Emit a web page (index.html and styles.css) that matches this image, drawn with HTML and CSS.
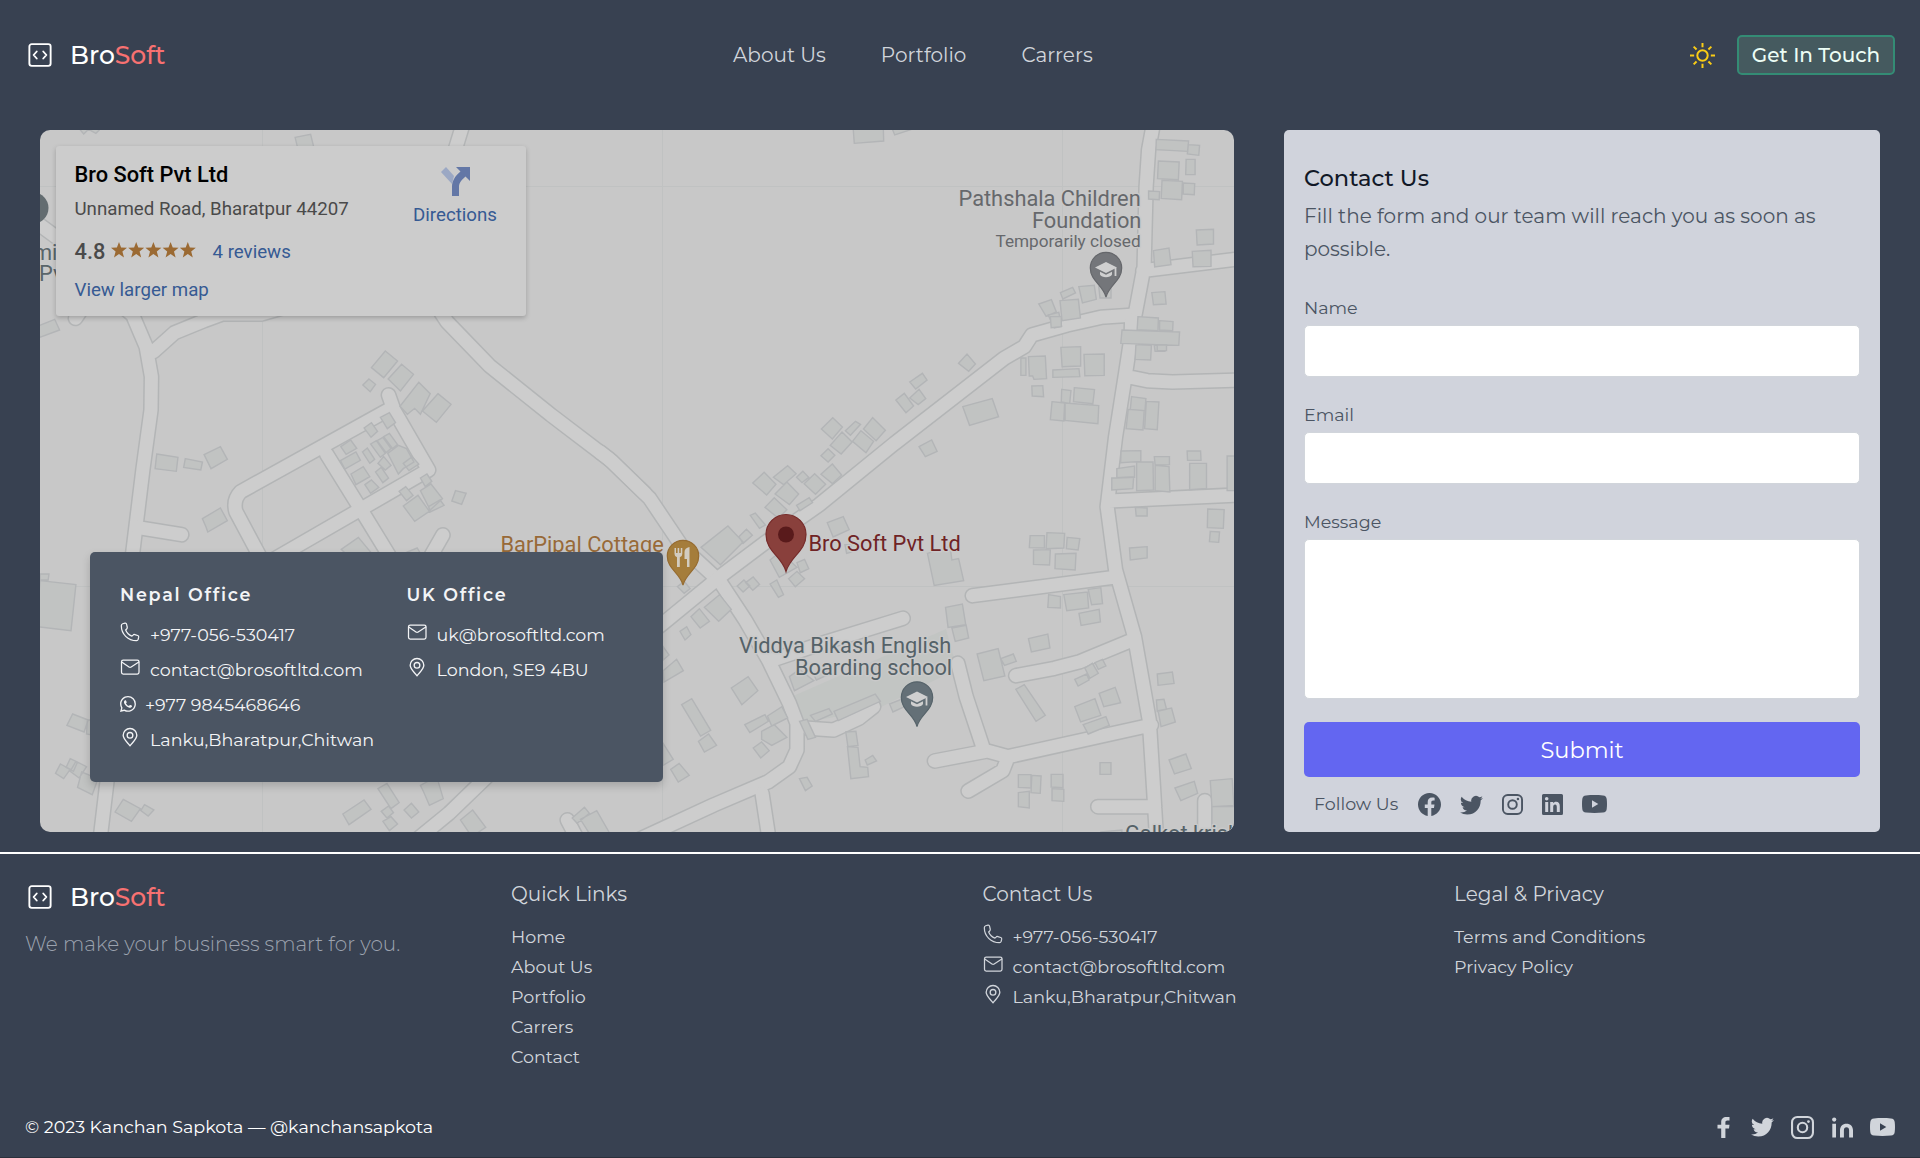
FILE: index.html
```html
<!DOCTYPE html>
<html lang="en">
<head>
<meta charset="utf-8">
<title>BroSoft</title>
<link rel="stylesheet" href="styles.css">
</head>
<body>
<svg class="sprite" aria-hidden="true">
  <symbol id="i-logo" viewBox="0 0 24 24"><g fill="none" stroke="currentColor" stroke-width="1.5" stroke-linecap="round" stroke-linejoin="round"><rect x="3.5" y="3.3" width="17" height="17.4" rx="1.9"/><path d="M9.4 9.2L6.9 12l2.5 2.8M14.6 9.2l2.5 2.8-2.5 2.8"/></g></symbol>
  <symbol id="i-phone" viewBox="0 0 24 24"><path fill="none" stroke="currentColor" stroke-width="1.5" stroke-linejoin="round" d="M3.2 2.1L6 1.4c1-.2 1.700.3 1.900 1.300L8.700 6.300c.2.9-.1 1.500-.7 2.100L6.800 9.600c1.300 3.200 4.300 6.100 7.500 7.400l1.300-1.300c.6-.7 1.300-.9 2.200-.6l3.400 1.100c1 .3 1.400 1 1.200 2l-.6 2.600c-.3 1.100-.9 1.600-2 1.600C9.500 22.400 1.600 14.500 1.600 4.500c0-1.300.5-2.100 1.600-2.400z"/></symbol>
  <symbol id="i-mail" viewBox="0 0 24 24"><g fill="none" stroke="currentColor" stroke-width="1.500" stroke-linejoin="round" stroke-linecap="round"><rect x="1.800" y="3.800" width="21" height="16.600" rx="2"/><path d="M2 6l8.800 6c.9.6 1.700.6 2.600 0L22.600 6"/></g></symbol>
  <symbol id="i-pin" viewBox="0 0 24 24"><g fill="none" stroke="currentColor" stroke-width="1.600"><path stroke-linejoin="round" d="M12 22.500c-3-4-8.200-8-8.200-12.500a8.200 8.200 0 0 1 16.400 0c0 4.500-5.200 8.500-8.200 12.500z"/><circle cx="12" cy="10" r="3.400"/></g></symbol>
  <symbol id="i-whatsapp" viewBox="0 0 16 16"><path fill="currentColor" d="M13.601 2.326A7.854 7.854 0 0 0 7.994 0C3.627 0 .068 3.558.064 7.926c0 1.399.366 2.760 1.057 3.965L0 16l4.204-1.102a7.933 7.933 0 0 0 3.790.965h.004c4.368 0 7.926-3.558 7.930-7.930A7.898 7.898 0 0 0 13.600 2.326zM7.994 14.521a6.573 6.573 0 0 1-3.356-.920l-.240-.144-2.494.654.666-2.433-.156-.251a6.560 6.560 0 0 1-1.007-3.505c0-3.626 2.957-6.584 6.591-6.584a6.560 6.560 0 0 1 4.660 1.931 6.557 6.557 0 0 1 1.928 4.660c-.004 3.639-2.961 6.592-6.592 6.592zm3.615-4.934c-.197-.099-1.170-.578-1.353-.646-.182-.065-.315-.099-.445.099-.133.197-.513.646-.627.775-.114.133-.232.148-.430.050-.197-.100-.836-.308-1.592-.985-.590-.525-.985-1.175-1.103-1.372-.114-.198-.011-.304.088-.403.087-.088.197-.232.296-.346.100-.114.133-.198.198-.330.065-.134.034-.248-.015-.347-.050-.099-.445-1.076-.612-1.470-.160-.389-.323-.335-.445-.340-.114-.007-.247-.007-.380-.007a.729.729 0 0 0-.529.247c-.182.198-.691.677-.691 1.654 0 .977.710 1.916.810 2.049.098.133 1.394 2.132 3.383 2.992.470.205.840.326 1.129.418.475.152.904.129 1.246.080.380-.058 1.171-.480 1.338-.943.164-.464.164-.860.114-.943-.049-.084-.182-.133-.380-.232z"/></symbol>
  <symbol id="i-fb-round" viewBox="0 0 16 16"><path fill="currentColor" d="M16 8.049c0-4.446-3.582-8.050-8-8.050C3.580 0-.002 3.603-.002 8.050c0 4.017 2.926 7.347 6.750 7.951v-5.625h-2.030V8.050H6.750V6.275c0-2.017 1.195-3.131 3.022-3.131.876 0 1.791.157 1.791.157v1.980h-1.009c-.993 0-1.303.621-1.303 1.258v1.510h2.218l-.354 2.326H9.250V16c3.824-.604 6.750-3.934 6.750-7.951z"/></symbol>
  <symbol id="i-fb" viewBox="0 0 12 21"><path fill="currentColor" d="M12 3.400V0H9C5.600 0 3.700 2 3.700 5v2.800H0v3.800h3.700V21h4.200v-9.400h3.600l.5-3.800H7.900V5.300c0-1.200.6-1.900 1.900-1.900z"/></symbol>
  <symbol id="i-twitter" viewBox="0 0 16 16"><path fill="currentColor" d="M5.026 15c6.038 0 9.341-5.003 9.341-9.334 0-.140 0-.282-.006-.422A6.685 6.685 0 0 0 16 3.542a6.658 6.658 0 0 1-1.889.518 3.301 3.301 0 0 0 1.447-1.817 6.533 6.533 0 0 1-2.087.793A3.286 3.286 0 0 0 7.875 6.030a9.325 9.325 0 0 1-6.767-3.429 3.289 3.289 0 0 0 1.018 4.382A3.323 3.323 0 0 1 .640 6.575v.045a3.288 3.288 0 0 0 2.632 3.218 3.203 3.203 0 0 1-.865.115 3.230 3.230 0 0 1-.614-.057 3.283 3.283 0 0 0 3.067 2.277A6.588 6.588 0 0 1 .780 13.580a6.320 6.320 0 0 1-.780-.045A9.344 9.344 0 0 0 5.026 15z"/></symbol>
  <symbol id="i-insta" viewBox="0 0 22 22"><g fill="none" stroke="currentColor" stroke-width="2"><rect x="1" y="1" width="20" height="20" rx="5"/><circle cx="11" cy="11" r="4.500"/></g><circle cx="16.700" cy="5.300" r="1.300" fill="currentColor"/></symbol>
  <symbol id="i-linkedin-box" viewBox="0 0 21 21"><path fill="currentColor" fill-rule="evenodd" d="M1.500 0h18A1.500 1.500 0 0 1 21 1.500v18a1.500 1.500 0 0 1-1.500 1.500h-18A1.500 1.500 0 0 1 0 19.500v-18A1.500 1.500 0 0 1 1.500 0zM3.200 8v9.900h3V8zM4.700 3a1.800 1.800 0 1 0 0 3.600 1.800 1.800 0 0 0 0-3.600zM8.200 8v9.900h3v-5c0-1.500.6-2.500 1.900-2.500s1.700 1 1.700 2.500v5h3v-5.600c0-3-1.200-4.600-3.600-4.600-1.500 0-2.400.7-3 1.600V8z"/></symbol>
  <symbol id="i-linkedin" viewBox="0 0 21 20"><g fill="currentColor"><circle cx="2.200" cy="2.100" r="2.100"/><path d="M.3 6.200H4V20H.3zM8 20v-7.200c0-4 2.600-6.600 6.500-6.600S21 8.800 21 12.800V20h-3.900v-7c0-2-.9-3.200-2.600-3.200S11.900 11 11.900 13v7z"/></g></symbol>
  <symbol id="i-youtube" viewBox="0 0 25 18"><path fill="currentColor" fill-rule="evenodd" d="M4 .4C9.500-.1 15.500-.1 21 .4c2.300.2 3.500 1.400 3.700 3.600.4 3.400.4 6.600 0 10-.2 2.200-1.400 3.400-3.700 3.600-5.500.5-11.500.5-17 0C1.700 17.400.5 16.200.3 14c-.4-3.400-.4-6.600 0-10C.5 1.800 1.700.6 4 .4zM10 5.200v7.600L16.300 9z"/></symbol>
  <symbol id="i-cap" viewBox="-12 -12 24 24"><g fill="#d0d0d0"><path d="M0-7L11-1.500 0 4-11-1.500z"/><path d="M-6 2.800L0 5.800l6-3V5.500C4.500 9-4.500 9-6 5.500zM8.600-1h1.800v8H8.600z"/></g></symbol>
</svg>

<header class="header">
  <a class="logo"><svg class="logo-icon"><use href="#i-logo"/></svg><span>Bro<span class="accent">Soft</span></span></a>
  <nav class="nav"><a>About Us</a><a>Portfolio</a><a>Carrers</a></nav>
  <div class="actions">
    <svg class="sun" viewBox="0 0 24 24"><g fill="none" stroke="#facc15" stroke-width="1.900"><circle cx="12" cy="12" r="5"/><path d="M12 0v4M12 20v4M0 12h4M20 12h4M3.500 3.500l2.800 2.800M17.700 17.700l2.800 2.800M3.500 20.500l2.800-2.800M17.700 6.300l2.800-2.800"/></g></svg>
    <a class="touch">Get In Touch</a>
  </div>
</header>

<main class="main">
  <section class="map">
    <svg class="map-art" viewBox="40 130 1194 702">
      <defs>
        <g id="roads" fill="none" stroke-linecap="round" stroke-linejoin="round">
          <g transform="scale(.40816 .33333)">
            <path d="M1135 370L1115 450 1060 900 1095 965 1200 1098 1350 1245 1500 1385 1580 1480"/>
            <path d="M70 650L150 722 240 860 325 945 358 1040 371 1130 370 1230 350 1410 325 1660 262 2346 245 2520M376 1055L428 998 500 962 545 942 640 942 760 900"/>
            <path d="M335 1582L445 1604M952 1185L965 1230 1050 1410 640 1700M958 1225L590 1475Q570 1500 578 1535L650 1700M800 1362L880 1520 970 1700M1085 1605L1050 1680M1210 2310L1100 2440 1010 2530M1390 2460L1420 2530M185 955L215 900"/>
          </g>
          <g transform="translate(640) scale(.40816 .33333)"><path d="M1258 370L1246 450 1240 560 1235 800 1212 950 1205 1030M1232 812L1480 775"/></g>
          <g transform="translate(600 320) scale(.42088 .33333)">
            <path d="M0 396L20 415 118 535 195 680 285 785 345 900 400 1020 450 1150 468 1210 468 1290 450 1340 400 1385 270 1455 150 1525 90 1560"/>
            <path d="M1262 -14L1190 -8 1110 15 1026 45 1008 80 960 115 700 370 520 555 390 670 285 770 150 910 60 1000"/>
            <path d="M1263 0L1262 50 1250 150 1225 350 1205 560 1225 750 1270 950 1305 1200 1315 1400 1322 1550M1262 172L1300 182 1360 186 1530 180M1210 543L1530 524M885 827L1215 773M1265 960L1140 1025 1080 1045 988 1067M1310 1215L970 1310 920 1293 795 1323M970 1310L957 1352 875 1413M912 1290L870 1130 850 1030M1318 1460L1183 1460M1437 1442L1437 1570M720 895L540 965 410 1020M385 1420L402 1560M495 1225L555 1230 615 1195 650 1160"/>
          </g>
        </g>
      </defs>
      <rect x="40" y="130" width="1194" height="702" fill="#c8c8c8"/>
      <path class="grid-line" d="M262.500 130v702M662.500 130v702M1062.500 130v702M40 186.500h1194M40 586.500h1194"/>
      <g class="school-area"><path d="M789 714L791 697 946 629 957 669 875 710 806 722z"/></g>
      <use href="#roads" class="road-edge"/>
      <use href="#roads" class="road-fill"/>
      <g class="buildings">
        <path transform="scale(.40816 .33333)" d="M190 380l15 22 12-14 18 12 18-22zM723 412l38-9 12 60h-40zM90 980l44-22 12 32-48 22z"/>
        <path transform="translate(0 320) scale(.40816 .33333)" d="M944 93l30 30-34 50-30-30zM984 133l29 30-32 50-30-36zM1026 187l28 34-24 62-14-18-18 18-18-24zM1073 221l32 32-36 54-34-34zM904 177l16 16-13 22-18-20zM384 402l52 10-4 42-52-8zM454 416l42 10-4 24-42-8zM500 404l40-24 17 38-40 28zM496 596l44-32 17 38-48 34-4-14zM1116 512l26 8-11 33-24-10zM932 292l22-14 15 30-20 18zM892 324l18-16 15 26-16 18zM835 380l24-20 15 25-26 18zM834 422l38-26 11 25-38 26zM860 462l30-22 16 30-34 24zM894 494l16-14 18 22-20 18zM888 396l12-12 18 34-12 12zM908 372l14-10 22 38-12 12zM924 362l14-10 20 34-12 12zM940 350l14-10 20 34-12 12zM926 430l14-20 18 26-14 14zM920 456l14-14 18 32-14 14zM950 400l26-24 20 10 18 40-26 20-12 16zM988 430l22-20 16 22-24 20zM978 514l16-14 18 26-16 16zM1030 474l16-12 12 22-16 16zM1030 512l26-20 28 44-30 34zM988 558l36-32 28 48-36 30zM1050 560l28-20 10 16-34 20zM836 688l42-36 30 44-40 30zM990 700l32-16 10 20zM98 782l88 12-12 138-84-12zM98 762h22l-2 18H98zM178 1182l38 18-10 36-42-20zM214 1200h16v46l-18-4zM172 1316l18 10-10 28-18-12zM148 1332l24 16-16 28-20-16zM186 1324l26 16-18 34-22-20zM200 1356l40 20-14 48-36-22zM302 1438l42 28-22 38-40-28zM354 1454l23 16-14 18-18-16zM840 1482l52-42 17 28-54 46zM926 1406l22-16 30 58-20 18zM934 1474l18-16 12 20-16 16zM938 1504l20-14 16 22-20 20zM990 1470l18-20 18 26-18 18zM1030 1396l40-26 16 66-34 20-14-40zM1128 1500l30-30 32 52-34 28zM1402 1494l30-32 12 18-30 30zM1422 1498l40-26 30 64-40 20z"/>
        <path transform="translate(640) scale(.40816 .33333)" d="M522 380h74l1 43-72 7zM616 380l8 25 44-18zM1265 418l79 5-2 31-78-5zM1343 434l28 2-2 30-28-4zM1270 483l51 3-2 53-51-3zM1338 478h22v46h-23zM1279 541l50 3-2 55-50-4zM1331 549l28 2-1 33-27-2zM1246 573l27 2-1 24-26-2zM1363 690l42-2v44l-40 3zM1258 752l38-8 5 50-40 7zM1353 754l46-3v48l-44 1zM1254 878l32-3 3 37-31 2zM1030 878l30-16 7 17-31 18zM977 912l31-13 12 37-25 13zM1029 902l45-4 5 56-45 8zM1075 860l38-4 5 42-34 11zM1000 945l26-8 7 42-18 5zM1124 860h30v34h-27zM1220 950l50 4-1 38-51-3zM1273 962l33 3-1 27-32-2zM1181 990l141 6-2 40-142-6zM1215 1034l38 2-2 44-38-2zM1260 1036h26v18h-24z"/>
        <path transform="translate(600 320) scale(.42088 .33333)" d="M553 293l23 28-24 36-26-30zM575 336l24 30-26 36-26-26zM607 304l12 9-24 33-12-14zM648 293l30 38-22 31-30-35zM620 332l30 32-18 34-32-34zM542 386l16 20-16 20-17-19zM552 432l22 33-22 26-27-28zM510 461l26 32-24 30-27-32zM390 457l28 36-22 32-33-36zM446 437l20 24-30 33-24-22zM482 454l14 18-16 16-13-16zM444 486l28 36-22 32-34-32zM414 533l30 36-20 26-32-33zM467 556l30-23 8 15-30 24zM357 586l12-7 24 36-14 10zM304 618l36 48-54 68-46-52zM330 650l18-22 14 18-22 24zM540 608l38-18 14 39-38 22zM582 674h14l2 22-12 4zM404 720l24-24 40 46-42 30zM468 728l18-10 10 28-20 12zM448 776l20-22 18 22-22 24zM404 792l16-12 16 44-12 8zM326 798l16-18 14 18-16 18zM346 788l18-17 15 22-16 18zM184 800l16-16 14 22-14 14zM248 862l36-38 28 44-30 36zM216 890l20-24 24 38-22 20zM190 934l16-14 10 24-14 16zM150 1052l32-34 16 34-46 34zM312 1104l40-34 23 42-38 42zM194 1154l24-18 45 95-24 17zM234 1264l24-22 19 34-29 20zM344 1214l48-30 8 20-44 34zM398 1188l34-28 14 34-38 24zM384 1234l30-20 30 38-36 24-24-18zM364 1284l20-18 18 26-20 22zM168 1348l20-18 24 36-26 20zM150 1270l24 48-24 18zM150 980l14 25-14 15zM474 1376l18-4 12 26-16 14zM474 1204l18-6 20 54-18 6zM584 1236l24-2 5 42-24 4zM588 1280l25 2 5 58 18 2 2 28-42 6zM630 1320l18-14 9 17-22 12zM500 1186l44-20 8 16-40 22zM556 1174l98-52 12 22-100 58zM688 1152l28-14 14 18-34 20zM450 1070l24-22 34 34-46 30zM508 1064l26-14 8 14-28 16zM778 700l54-20 4 40 16-4 12 66-70 14zM821 862l40-10 8 62-42 8zM836 924l34-8 6 38-32 10zM862 260l70-24 15 54-69 26zM758 380l30-20 13 34-28 16zM852 130l20-28 20 30-16 22zM736 186l30-26 11 20-27 27zM736 234l22-26 16 28-18 18zM703 240l20-20 22 38-18 20zM1000 114h12v52h-12zM1018 110l40-2 3 68-30 2-3-10h-8zM1095 82l47-2v58l-44 2zM1076 150l62-4 2 24-64 2zM1150 103l48-1v64l-46 1zM1026 198l26-1 2 33-27-2zM1097 208l22 4-3 38-20-4zM1127 203l48 6-4 42-46-6zM1074 245l30 4-2 54-32-4zM1105 249l80 8-2 54-78-10zM1070 -10h26v30l-24 3zM1324 75h22v17h-22zM1263 230l34 6-2 36-35-4zM1298 244l30 2-4 83-30-3zM1255 268l38 4-3 58-40-4zM1238 393l47-1v32l-48 4zM1228 446l42-8v34l-42 2zM1275 426h39l1 84-40 2zM1317 410h36v24l-34 1zM1319 436l33 4 2 76-35-4zM1216 474l52-4-2 36-50 4zM1395 393h32l1 28h-32zM1401 430h40v75l-40 4zM1490 408h25v104h-25zM1272 562l28 2v24h-26zM1444 567l39 2-2 56-38-2zM1450 634l22 2-2 31-22-2zM1258 684l42-4v34l-40 6zM1022 647h34v37l-36-1zM1062 638l42 2-2 44-42 2zM1110 652l30 4-4 34-28-4zM1030 690l40-1-2 46-38-2zM1082 702l49-2-2 50-48-4zM1066 824l28 6v34l-30-2zM1102 824l56-8 3 48-52 8zM1160 808l30-5 4 48-26 3zM1138 880l48-12 3 38-46 10zM1018 956l46-14 5 42-44 12zM896 1002l50-16 16 82-50 14zM952 1016l30-14 7 22-28 12zM988 1108l20-14 50 92-22 18zM1128 1078l28-16 6 18-26 18zM1152 1044l18-14 14 30-20 15zM1176 1028l18-10 8 20-18 10zM1186 1120l38-18 13 46-40 12zM1128 1160l48-24 14 50-48 20zM1148 1214l54-24 8 26-50 26zM1324 1062l36-6 4 34-38 6zM1322 1140l18-2 6 30-22 6zM1326 1172l32-8 9 42-34 14zM1352 1320l40-18 13 44-40 16zM1366 1404l46-20 8 36-40 22zM1450 1382l52-6 4 80-52 4zM1454 1460h60v80h-60zM1188 1328h26v35h-26zM994 1364h30v40l-30-2zM1026 1366l22 2-2 52-22-2zM1072 1363h28v40l-28-2zM1074 1406l28 2v36l-28-2zM994 1418l26-4v50l-26-4zM1190 1536l50-6v20h-50z"/>
      </g>
      <circle cx="33" cy="208" r="15.500" fill="#636c70"/>
      <g class="labels">
        <text x="33" y="260" fill="#59656a">mi</text><text x="39" y="281" fill="#59656a">Pvt</text>
        <text x="958.500" y="206" fill="#66686c">Pathshala Children</text>
        <text x="1032" y="228" fill="#66686c">Foundation</text>
        <text x="995.500" y="246.500" class="small" fill="#66686c">Temporarily closed</text>
        <text x="500.500" y="551.500" fill="#986a38">BarPipal Cottage</text>
        <text x="808.500" y="550.500" fill="#6f2325">Bro Soft Pvt Ltd</text>
        <text x="739" y="653" fill="#556268">Viddya Bikash English</text>
        <text x="795" y="675" fill="#556268">Boarding school</text>
        <text x="1125" y="840.500" fill="#556268">Galkot krishi</text>
      </g>
      <g stroke-width="1.200">
        <g transform="translate(1106 268)"><path fill="#74767a" stroke="#65676b" d="M0 29C-3 17-15.700 13-15.700 0a15.700 15.700 0 1 1 31.400 0C15.700 13 3 17 0 29z"/><use href="#i-cap" x="-12" y="-11" width="24" height="24"/></g>
        <g transform="translate(917 697.500)"><path fill="#647077" stroke="#56636a" d="M0 29C-3 17-15.700 13-15.700 0a15.700 15.700 0 1 1 31.400 0C15.700 13 3 17 0 29z"/><use href="#i-cap" x="-12" y="-11" width="24" height="24"/></g>
        <g transform="translate(683 556)"><path fill="#a57d3b" stroke="#966c31" d="M0 29C-3 17-15.700 13-15.700 0a15.700 15.700 0 1 1 31.400 0C15.700 13 3 17 0 29z"/><path fill="#d2ccc0" d="M-8.500-8h1.500v5h1.600v-5h1.600v5h1.600v-5h1.500v6q0 2.500-2.500 3.300V11h-2.800V1.300Q-8.500.5-8.500-2zM6.500-9V11H4V3H1.500v-7Q1.500-8 6.500-9z"/></g>
        <g transform="translate(786 534.500)"><path fill="#89403c" stroke="#762b2a" d="M0 37C-4 22-20 17-20 0a20 20 0 1 1 40 0C20 17 4 22 0 37z"/><circle r="8" fill="#591a1b"/></g>
      </g>
    </svg>

    <div class="place">
      <div class="place-info">
        <div class="place-name">Bro Soft Pvt Ltd</div>
        <div class="place-address">Unnamed Road, Bharatpur 44207</div>
        <div class="rating"><span class="score">4.8</span>
          <svg class="stars" viewBox="0 0 85 16"><path fill="#9b6a33" d="M8 0l2.100 5.500 5.900.3-4.600 3.700L13 15.500 8 12l-5 3.500 1.600-6L0 5.800l5.900-.3zM25.200 0l2.100 5.500 5.900.3-4.600 3.700 1.600 6-5-3.500-5 3.500 1.600-6-4.600-3.700 5.900-.3zM42.400 0l2.100 5.500 5.900.3-4.600 3.700 1.600 6-5-3.500-5 3.500 1.600-6-4.600-3.700 5.900-.3zM59.600 0l2.100 5.500 5.900.3-4.600 3.700 1.600 6-5-3.500-5 3.500 1.600-6-4.600-3.700 5.900-.3zM76.800 0l2.100 5.500 5.900.3-4.600 3.700 1.600 6-5-3.500-5 3.500 1.600-6-4.600-3.700 5.900-.3z"/></svg>
          <a class="link">4 reviews</a></div>
        <a class="link">View larger map</a>
      </div>
      <div class="directions">
        <svg class="dir-icon" viewBox="0 0 29 29"><path fill="#9ba8c4" d="M5 0l8 9-2 8L0 5z"/><path fill="#6377a6" d="M15 0h14v14l-4.500-4.500C20 13.500 18 16 18 20v9h-7v-9c0-6 3-11 8.500-15.500z"/></svg>
        <a class="link">Directions</a>
      </div>
    </div>

    <div class="offices">
      <div class="office">
        <h3>Nepal Office</h3>
        <div class="line"><svg><use href="#i-phone"/></svg><span>+977-056-530417</span></div>
        <div class="line"><svg><use href="#i-mail"/></svg><span>contact@brosoftltd.com</span></div>
        <div class="line chat"><svg><use href="#i-whatsapp"/></svg><span>+977 9845468646</span></div>
        <div class="line"><svg><use href="#i-pin"/></svg><span>Lanku,Bharatpur,Chitwan</span></div>
      </div>
      <div class="office">
        <h3>UK Office</h3>
        <div class="line"><svg><use href="#i-mail"/></svg><span>uk@brosoftltd.com</span></div>
        <div class="line"><svg><use href="#i-pin"/></svg><span>London, SE9 4BU</span></div>
      </div>
    </div>
  </section>

  <section class="contact">
    <h2>Contact Us</h2>
    <p class="lead">Fill the form and our team will reach you as soon as possible.</p>
    <div class="field"><label>Name</label><input class="box" type="text"></div>
    <div class="field"><label>Email</label><input class="box" type="text"></div>
    <div class="field"><label>Message</label><textarea class="box tall"></textarea></div>
    <button class="submit" type="button">Submit</button>
    <div class="follow">
      <span class="follow-label">Follow Us</span>
      <svg class="s23"><use href="#i-fb-round"/></svg>
      <svg class="s23"><use href="#i-twitter"/></svg>
      <svg class="s21"><use href="#i-insta"/></svg>
      <svg class="s21"><use href="#i-linkedin-box"/></svg>
      <svg class="s25"><use href="#i-youtube"/></svg>
    </div>
  </section>
</main>

<footer class="footer">
  <div class="columns">
    <div>
      <a class="logo"><svg class="logo-icon"><use href="#i-logo"/></svg><span>Bro<span class="accent">Soft</span></span></a>
      <p class="tagline">We make your business smart for you.</p>
    </div>
    <div>
      <h4>Quick Links</h4>
      <a class="item">Home</a><a class="item">About Us</a><a class="item">Portfolio</a><a class="item">Carrers</a><a class="item">Contact</a>
    </div>
    <div>
      <h4>Contact Us</h4>
      <div class="line"><svg><use href="#i-phone"/></svg><span>+977-056-530417</span></div>
      <div class="line"><svg><use href="#i-mail"/></svg><span>contact@brosoftltd.com</span></div>
      <div class="line"><svg><use href="#i-pin"/></svg><span>Lanku,Bharatpur,Chitwan</span></div>
    </div>
    <div>
      <h4>Legal &amp; Privacy</h4>
      <a class="item">Terms and Conditions</a><a class="item">Privacy Policy</a>
    </div>
  </div>
  <div class="bottom">
    <span class="copyright">© 2023 Kanchan Sapkota — @kanchansapkota</span>
    <div class="social">
      <svg class="s21"><use href="#i-fb"/></svg>
      <svg class="s23 bird"><use href="#i-twitter"/></svg>
      <svg class="s23"><use href="#i-insta"/></svg>
      <svg class="s21"><use href="#i-linkedin"/></svg>
      <svg class="s25"><use href="#i-youtube"/></svg>
    </div>
  </div>
</footer>
</body>
</html>
```
FILE: styles.css
```css
* { box-sizing: border-box; }
body {
  margin: 0;
  height: 1158px;
  overflow: hidden;
  background: #384151;
  color: #d1d5db;
  font: 400 17.5px/30px Montserrat, Inter, "Liberation Sans", sans-serif;
}
h2, h3, h4, p { margin: 0; font-weight: 400; }
svg { display: block; flex: none; }
.sprite { position: absolute; width: 0; height: 0; }

.header {
  display: grid;
  grid-template-columns: 708px 1fr auto;
  align-items: center;
  height: 110px;
  padding: 0 25px;
}
.logo {
  display: flex;
  align-items: center;
  gap: 15px;
  color: #fff;
  font-size: 25px;
  font-weight: 500;
}
.logo-icon { width: 30px; height: 30px; }
.accent { color: #f87171; }
.nav { display: flex; gap: 55px; font-size: 20px; }
.actions { display: flex; align-items: center; gap: 22px; }
.sun { width: 25px; height: 25px; }
.touch {
  display: flex;
  align-items: center;
  justify-content: center;
  width: 158px;
  height: 40px;
  border: 2px solid #348c75;
  border-radius: 5px;
  background: #455a5f;
  color: #ecfdf5;
  font-size: 20px;
  font-weight: 500;
}

.main {
  display: grid;
  grid-template-columns: 1194px 596px;
  gap: 50px;
  height: 742px;
  padding: 20px 40px;
}
.map { position: relative; overflow: hidden; border-radius: 10px; }
.map-art { width: 1194px; height: 702px; }
.grid-line { stroke: #c0c2c2; stroke-width: 1; fill: none; }
.school-area { fill: #c2c5c3; }
#roads path { vector-effect: non-scaling-stroke; }
.road-edge { stroke: #b3b5b6; stroke-width: 16px; }
.road-fill { stroke: #cdcdcd; stroke-width: 13px; }
.buildings path {
  fill: #c1c3c2;
  stroke: #b3b5b7;
  stroke-width: 1.4px;
  vector-effect: non-scaling-stroke;
}
.labels {
  font: 400 21.8px Roboto, sans-serif;
  paint-order: stroke;
  stroke: #c9c9c9;
  stroke-width: 3px;
  stroke-linejoin: round;
}
.labels .small { font-size: 17.2px; }

.place {
  position: absolute;
  left: 16px;
  top: 16px;
  display: flex;
  justify-content: space-between;
  width: 470px;
  height: 170px;
  padding: 16px 29px 0 18.5px;
  border-radius: 3px;
  background: #ccc;
  box-shadow: 0 2px 5px rgba(0, 0, 0, .22);
  color: #4a4a4a;
  font: 400 18.7px/26px Roboto, sans-serif;
}
.place-name { color: #000; font-size: 21.8px; font-weight: 500; }
.place-address { margin-top: 8px; }
.rating { display: flex; align-items: center; margin: 16.5px 0 12px; }
.score { font-size: 21.8px; font-weight: 500; width: 36px; }
.stars { width: 85px; height: 16px; margin: -4px 17px 0 0; }
.link { color: #365a93; }
.directions { display: flex; flex-direction: column; align-items: center; padding-top: 5px; }
.dir-icon { width: 29px; height: 29px; margin-bottom: 6px; }

.offices {
  position: absolute;
  left: 50px;
  top: 422px;
  display: grid;
  grid-template-columns: 286.5px 1fr;
  width: 573px;
  height: 230px;
  padding: 27.5px 30px;
  border-radius: 5px;
  background: #4b5563;
  box-shadow: 0 4px 8px rgba(0, 0, 0, .18);
  color: #f3f4f6;
}
.office h3 { margin-bottom: 7.5px; font-size: 17.5px; font-weight: 600; letter-spacing: 1.75px; }
.line { display: flex; align-items: center; gap: 10px; height: 30px; }
.line svg { width: 20px; height: 20px; margin-top: -5px; }
.office .line { height: 35px; }
.chat { gap: 9px; }
.chat svg { width: 16px; height: 16px; margin-top: -1px; }

.contact {
  padding: 27px 20px 0;
  border-radius: 5px;
  background: #d0d3dc;
  color: #4b5563;
}
.contact h2 { color: #111827; font-size: 22.5px; font-weight: 500; line-height: 42.5px; }
.lead { font-size: 20px; line-height: 33px; margin-bottom: 27px; }
.field { margin-bottom: 22.5px; }
.field label { display: block; margin-bottom: 2.5px; }
.box {
  display: block;
  width: 556px;
  height: 52px;
  border: 1px solid #d1d5db;
  border-radius: 5px;
  background: #fff;
  outline: 0;
  resize: none;
}
.tall { height: 160px; }
.submit {
  display: block;
  width: 556px;
  height: 55px;
  padding: 2px 0 0;
  border: 0;
  border-radius: 5px;
  background: #6366f1;
  color: #fff;
  font: inherit;
  font-size: 22.5px;
}
.follow { display: flex; align-items: center; gap: 19px; height: 55px; padding-left: 10px; }
.follow-label { width: 84px; margin-right: 1px; white-space: nowrap; }
.s21 { width: 21px; height: 21px; }
.s23 { width: 23px; height: 23px; }
.s25 { width: 25px; height: 18px; }
.bird { margin-top: -1px; }

.footer {
  display: flex;
  flex-direction: column;
  justify-content: space-between;
  height: 306px;
  padding: 25px 25px 15px;
  border-top: 2px solid #fff;
  border-bottom: 1px solid #2b303b;
}
.columns { display: grid; grid-template-columns: 486px 471.5px 471.5px 1fr; }
.columns .logo { padding-top: 3px; }
.tagline { margin-top: 17px; color: #9ca3af; font-size: 20px; font-weight: 300; }
.columns h4 { margin-bottom: 12.5px; font-size: 20px; }
.item { display: block; }
.bottom { display: flex; align-items: center; justify-content: space-between; }
.copyright { color: #fff; }
.social { display: flex; align-items: center; gap: 17.3px; }
```
